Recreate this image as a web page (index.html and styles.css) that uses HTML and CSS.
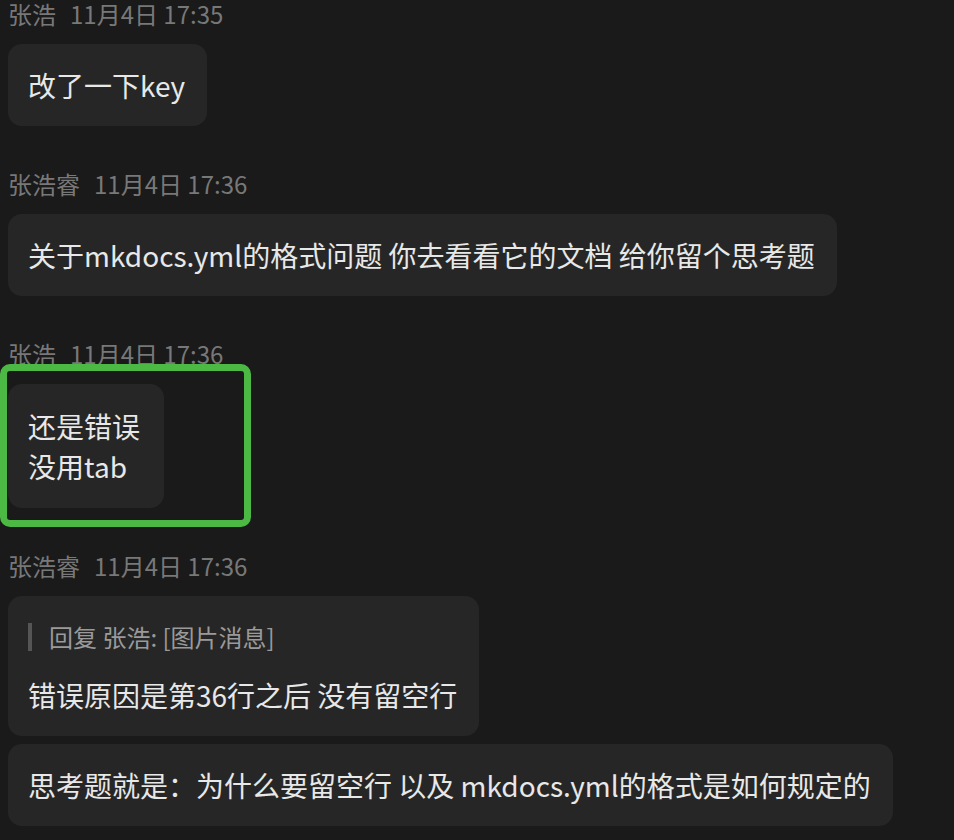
FILE: index.html
```html
<!DOCTYPE html>
<html lang="zh-CN">
<head>
<meta charset="utf-8">
<link rel="stylesheet" href="styles.css">
</head>
<body>
<div class="chat">
  <div class="group">
    <div class="meta"><span class="name">张浩</span><span class="time">11月4日 17:35</span></div>
    <div class="bubble">改了一下key</div>
  </div>
  <div class="group">
    <div class="meta"><span class="name">张浩睿</span><span class="time">11月4日 17:36</span></div>
    <div class="bubble">关于mkdocs.yml的格式问题 你去看看它的文档 给你留个思考题</div>
  </div>
  <div class="group">
    <div class="meta"><span class="name">张浩</span><span class="time">11月4日 17:36</span></div>
    <div class="highlighted">
      <div class="bubble">还是错误<br>没用tab</div>
      <div class="mark"></div>
    </div>
  </div>
  <div class="group">
    <div class="meta"><span class="name">张浩睿</span><span class="time">11月4日 17:36</span></div>
    <div class="bubble reply">
      <div class="quote">回复 张浩: [图片消息]</div>
      <div class="text">错误原因是第36行之后 没有留空行</div>
    </div>
    <div class="bubble">思考题就是：为什么要留空行 以及 mkdocs.yml的格式是如何规定的</div>
  </div>
</div>
</body>
</html>
```

FILE: styles.css
```css
html, body {
  margin: 0;
  padding: 0;
  background: #1a1a1a;
}
body {
  font-family: "Noto Sans CJK SC", "Open Sans", sans-serif;
  width: 954px;
  height: 840px;
  overflow: hidden;
}
.chat {
  display: flex;
  flex-direction: column;
  gap: 44px;
  padding: 0 8px;
}
.group {
  display: flex;
  flex-direction: column;
  align-items: flex-start;
  gap: 8px;
}
.meta {
  font-size: 24px;
  line-height: 28px;
  height: 28px;
  color: #787878;
  margin-bottom: 8px;
  white-space: nowrap;
}
.time {
  margin-left: 14px;
}
.bubble {
  background: #262626;
  color: #e8e8e8;
  font-size: 28px;
  line-height: 40px;
  padding: 21px 22px 21px 20px;
  border-radius: 14px;
  white-space: nowrap;
}
.highlighted {
  position: relative;
}
.highlighted .bubble {
  padding-top: 22px;
  padding-bottom: 22px;
  padding-right: 24px;
}
.mark {
  position: absolute;
  left: -8px;
  top: -20px;
  width: 251px;
  height: 163px;
  box-sizing: border-box;
  border: 7px solid #4cb944;
  border-radius: 10px;
  pointer-events: none;
}
.bubble.reply {
  padding-top: 27px;
}
.quote {
  font-size: 24px;
  line-height: 28px;
  color: #9a9a9a;
  border-left: 4px solid #555555;
  padding-left: 17px;
  margin-bottom: 24px;
}
```
